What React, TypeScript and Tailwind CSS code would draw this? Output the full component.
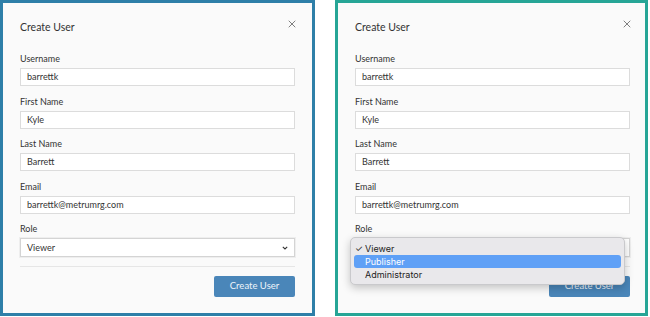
import { X } from 'lucide-react'

const fields = [
  { label: 'Username', value: 'barrettk' },
  { label: 'First Name', value: 'Kyle' },
  { label: 'Last Name', value: 'Barrett' },
  { label: 'Email', value: 'barrettk@metrumrg.com' },
]

const roles = ['Viewer', 'Publisher', 'Administrator']

function Chevron() {
  return (
    <svg width="6" height="4" viewBox="0 0 6 4" className="text-[#333]">
      <path d="M0.8 0.8 L3 3 L5.2 0.8" fill="none" stroke="currentColor" strokeWidth="1.1" />
    </svg>
  )
}

function RoleMenu() {
  return (
    <div className="absolute left-[-5px] top-[-1px] z-10 w-[275px] rounded-[5px] border border-[#c9c9cc] bg-[#e9e8eb] pb-[3px] pt-[4px] shadow-[0_3px_8px_rgba(0,0,0,0.22)] font-['Inter',sans-serif] text-[9px] text-[#222]">
      {roles.map((role, index) => (
        <div
          key={role}
          className={
            index === 1
              ? 'relative mx-[3px] flex h-[13px] items-center rounded-[3px] bg-[#5fa0f6] pl-[11px] text-white'
              : 'relative mx-[3px] flex h-[13px] items-center pl-[11px]'
          }
        >
          {index === 0 && <span className="absolute left-[1px] text-[9px] leading-none">✓</span>}
          {role}
        </div>
      ))}
    </div>
  )
}

function CreateUserDialog({ frame, open }: { frame: string; open: boolean }) {
  return (
    <div className={`h-[316px] border-[3px] bg-[#fafafa] pl-[17px] ${frame}`}>
      <div className="flex h-[50px] items-start justify-between pt-[17px]">
        <h2 className="text-[10.5px] leading-[14px] text-[#333]">Create User</h2>
        <X className="mr-[-3px] mt-[-2px] h-[12px] w-[12px] text-[#555]" strokeWidth={1.5} />
      </div>

      {fields.map((field) => (
        <div key={field.label} className="mb-[9.5px]">
          <label className="block h-[12px] text-[9px] leading-[12px] text-[#333]">{field.label}</label>
          <div className="mt-[3px] flex h-[18px] items-center border border-[#dcdcdc] bg-white px-[6px] text-[9px] text-[#333]">
            {field.value}
          </div>
        </div>
      ))}

      <div>
        <label className="block h-[12px] text-[9px] leading-[12px] text-[#333]">Role</label>
        <div className="relative mt-[3px]">
          <div className="flex h-[19px] items-center justify-between border border-[#d4d4d4] bg-white px-[6px] text-[9px] text-[#333] shadow-[0_0_0_1px_#eeeeee]">
            Viewer
            <Chevron />
          </div>
          {open && <RoleMenu />}
        </div>
      </div>

      <div className="mt-[9px] border-t border-[#e6e6e6]" />

      <div className="mt-[9px] flex justify-end">
        <button className="h-[21px] w-[81px] rounded-[2px] bg-[#4a86b9] text-[9.5px] text-[#eef4fa]">
          Create User
        </button>
      </div>
    </div>
  )
}

export default function App() {
  return (
    <div className="flex h-[317px] w-[650px] gap-[20px] bg-white font-['Lato',sans-serif]">
      <div className="w-[315px] [&>div]:pr-[17px]">
        <CreateUserDialog frame="border-[#2e7fa8]" open={false} />
      </div>
      <div className="w-[313px] [&>div]:pr-[15px]">
        <CreateUserDialog frame="border-[#26a596]" open={true} />
      </div>
    </div>
  )
}
